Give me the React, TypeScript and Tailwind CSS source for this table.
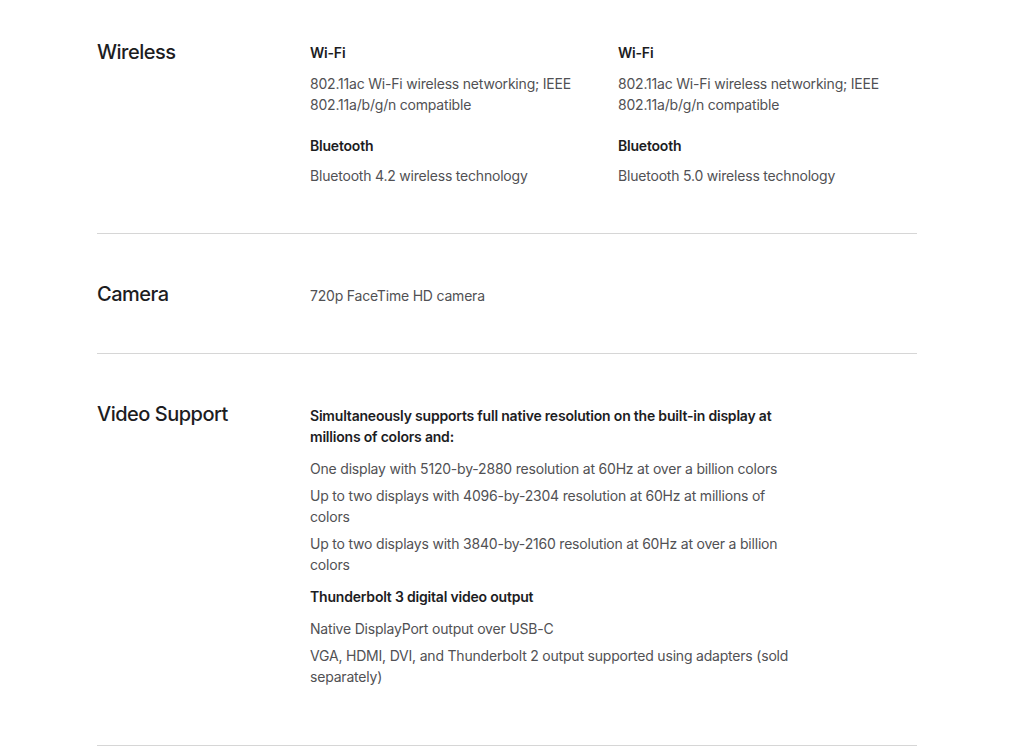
const wireless = [
  {
    wifi: "802.11ac Wi-Fi wireless networking; IEEE 802.11a/b/g/n compatible",
    bluetooth: "Bluetooth 4.2 wireless technology",
  },
  {
    wifi: "802.11ac Wi-Fi wireless networking; IEEE 802.11a/b/g/n compatible",
    bluetooth: "Bluetooth 5.0 wireless technology",
  },
];

const displays = [
  "One display with 5120-by-2880 resolution at 60Hz at over a billion colors",
  "Up to two displays with 4096-by-2304 resolution at 60Hz at millions of colors",
  "Up to two displays with 3840-by-2160 resolution at 60Hz at over a billion colors",
];

const outputs = [
  "Native DisplayPort output over USB-C",
  "VGA, HDMI, DVI, and Thunderbolt 2 output supported using adapters (sold separately)",
];

function RowTitle({ children }: { children: string }) {
  return (
    <h2 className="w-[213px] shrink-0 text-[20px] leading-[28px] font-medium text-[#1d1d1f] tracking-[-0.5px]">
      {children}
    </h2>
  );
}

export default function App() {
  return (
    <div
      className="min-h-screen bg-white text-[14px] leading-[21px] tracking-[-0.2px] text-[#515154]"
      style={{ fontFamily: "Inter, 'Noto Sans', sans-serif" }}
    >
      <div className="w-[820px] ml-[97px]">
        {/* Wireless */}
        <section className="flex pt-[38px] pb-[47px] border-b border-[#d6d6d6]">
          <RowTitle>Wireless</RowTitle>
          <div className="flex">
            {wireless.map((col, i) => (
              <div key={i} className="w-[308px] pt-[4px]">
                <h3 className="font-semibold text-[#1d1d1f]">Wi-Fi</h3>
                <p className="mt-[10px] w-[270px]">{col.wifi}</p>
                <h3 className="mt-[20px] font-semibold text-[#1d1d1f]">Bluetooth</h3>
                <p className="mt-[9px]">{col.bluetooth}</p>
              </div>
            ))}
          </div>
        </section>

        {/* Camera */}
        <section className="flex items-center pt-[46px] pb-[45px] border-b border-[#d6d6d6]">
          <RowTitle>Camera</RowTitle>
          <p className="pt-[3px]">720p FaceTime HD camera</p>
        </section>

        {/* Video Support */}
        <section className="flex pt-[46px] pb-[58px] border-b border-[#d6d6d6]">
          <RowTitle>Video Support</RowTitle>
          <div className="w-[490px] pt-[5px]">
            <h3 className="font-semibold text-[#1d1d1f]">
              Simultaneously supports full native resolution on the built-in display at millions of colors and:
            </h3>
            <ul className="mt-[11px] flex flex-col gap-[6px]">
              {displays.map((d) => (
                <li key={d}>{d}</li>
              ))}
            </ul>
            <h3 className="mt-[11px] font-semibold text-[#1d1d1f]">Thunderbolt 3 digital video output</h3>
            <ul className="mt-[11px] flex flex-col gap-[6px]">
              {outputs.map((d) => (
                <li key={d}>{d}</li>
              ))}
            </ul>
          </div>
        </section>
      </div>
    </div>
  );
}
